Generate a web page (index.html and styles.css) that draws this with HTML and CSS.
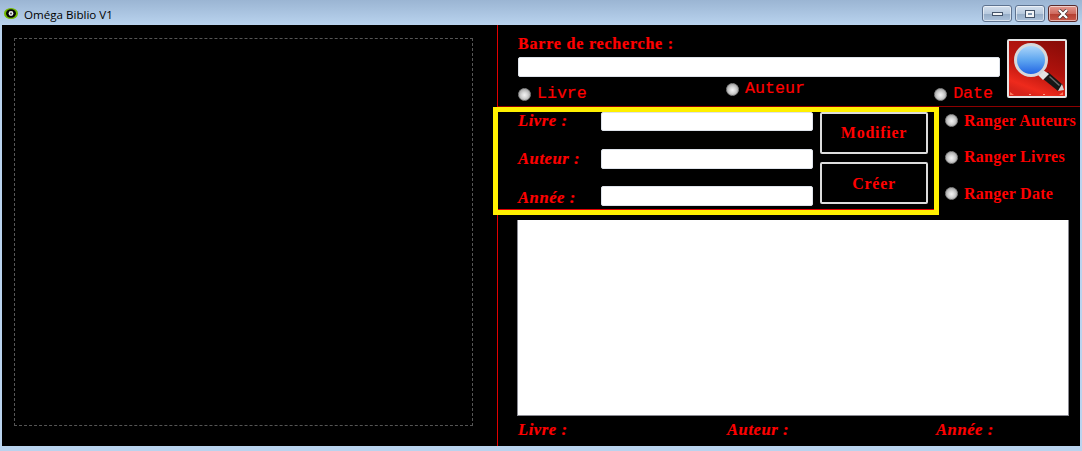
FILE: index.html
```html
<!DOCTYPE html>
<html lang="fr">
<head>
<meta charset="utf-8">
<title>Oméga Biblio V1</title>
<link rel="stylesheet" href="styles.css">
</head>
<body>
<div class="window">
  <header class="titlebar">
    <svg class="app-icon" width="14" height="11" viewBox="0 0 14 11"><ellipse cx="7" cy="5.5" rx="7" ry="5.5" fill="#72b800"/><ellipse cx="7" cy="5.5" rx="5" ry="4.2" fill="#050505"/><circle cx="7" cy="5.5" r="2.4" fill="#eee"/><circle cx="7" cy="5.5" r=".9" fill="#333"/></svg>
    <span class="app-title">Oméga Biblio V1</span>
    <div class="controls">
      <div class="ctl"><svg width="13" height="7" viewBox="0 0 13 7"><rect x="1.5" y="2.5" width="10" height="3" fill="#f2f4f6" stroke="#44546a"/></svg></div>
      <div class="ctl"><svg width="12" height="10" viewBox="0 0 12 10"><rect x="1.5" y="1.5" width="9" height="7" fill="#f2f4f6" stroke="#44546a"/><rect x="4" y="4" width="4" height="2" fill="#7f95ae"/></svg></div>
      <div class="ctl ctl-close"><svg width="14" height="10" viewBox="0 0 14 10"><path d="M3 1 L11 9 M11 1 L3 9" stroke="#4a3030" stroke-width="3.8"/><path d="M3 1 L11 9 M11 1 L3 9" stroke="#fff" stroke-width="2.4"/></svg></div>
    </div>
  </header>
  <main class="client">
    <section class="left"><div class="preview"></div></section>
    <section class="right">
      <div class="search">
        <div class="search-main">
          <div class="search-label">Barre de recherche :</div>
          <div class="field search-field"></div>
          <div class="search-types">
            <label class="type"><span class="radio"></span>Livre</label>
            <label class="type type-raised"><span class="radio"></span>Auteur</label>
            <label class="type"><span class="radio"></span>Date</label>
          </div>
        </div>
        <button class="search-btn" aria-label="Rechercher">
          <svg width="56" height="55" viewBox="0 0 56 55">
            <defs>
              <linearGradient id="bg" x1="0.8" y1="0" x2="0.4" y2="1"><stop offset="0" stop-color="#8a0c08"/><stop offset=".5" stop-color="#b0120c"/><stop offset=".88" stop-color="#ee2a1c"/><stop offset="1" stop-color="#d8241a"/></linearGradient>
              <linearGradient id="lens" x1="0" y1="0" x2="0" y2="1"><stop offset="0" stop-color="#b4dafa"/><stop offset=".5" stop-color="#5ea6f0"/><stop offset="1" stop-color="#1c5ee2"/></linearGradient>
            </defs>
            <rect width="56" height="55" fill="url(#bg)"/>
            <path d="M0 0 H22 L0 22 Z" fill="#d8261a" opacity=".3"/>
            <path d="M39 31 L54 44 L49 50 L33 37 Z" fill="#161616"/>
            <path d="M41 35 L51 44 L50 45 L40 36 Z" fill="#6a6a6a"/>
            <path d="M34 29 L40 33 L34 39 L29 34 Z" fill="#e2e2e2"/>
            <path d="M53 43 L55 49 L49 50 Z" fill="#d4d4d4"/>
            <circle cx="22" cy="19" r="15.5" fill="url(#lens)" stroke="#d6d8da" stroke-width="3"/>
            <path d="M1 51 L5 54 H1 Z M54 51 L54 54 H50 Z" fill="#ff7a60"/>
            <path d="M20 53 h2 v1 h-2 Z M34 53 h2 v1 h-2 Z" fill="#ff9a88"/>
          </svg>
        </button>
      </div>
      <div class="middle">
        <div class="form-box">
          <div class="form-fields">
            <div class="form-row row-a"><span class="italic-label">Livre :</span><div class="field form-field"></div></div>
            <div class="form-row row-b"><span class="italic-label">Auteur :</span><div class="field form-field"></div></div>
            <div class="form-row row-c"><span class="italic-label">Année :</span><div class="field form-field"></div></div>
          </div>
          <div class="form-actions">
            <button class="action">Modifier</button>
            <button class="action action-low">Créer</button>
          </div>
        </div>
        <div class="sort">
          <label class="sort-item"><span class="radio"></span>Ranger Auteurs</label>
          <label class="sort-item"><span class="radio"></span>Ranger Livres</label>
          <label class="sort-item"><span class="radio"></span>Ranger Date</label>
        </div>
      </div>
      <div class="listing"></div>
      <div class="summary">
        <span class="italic-label">Livre :</span>
        <span class="italic-label">Auteur :</span>
        <span class="italic-label">Année :</span>
      </div>
    </section>
  </main>
</div>
</body>
</html>
```
FILE: styles.css
```css
* { box-sizing: border-box; }
html, body { margin: 0; height: 100%; }
body { background: #b9d3ee; overflow: hidden; }
.window { width: 1082px; height: 451px; display: flex; flex-direction: column; background: linear-gradient(#9bb5d3 0, #b9d3ee 25px); padding: 0 2px 5px; }
.titlebar { height: 25px; flex: none; display: flex; align-items: center; padding: 3px 0 0 2px; font: 11.6px "Open Sans", "Noto Sans", sans-serif; color: #000; }
.app-icon { flex: none; margin-top: -2px; }
.app-title { margin-left: 6px; }
.controls { margin-left: auto; display: flex; gap: 3px; padding-right: 2px; align-self: flex-start; margin-top: 2px; }
.ctl { width: 30px; height: 17px; border: 1px solid #5e7390; border-radius: 3px; background: linear-gradient(#d4e0ee 0, #b8cade 50%, #94abc5 51%, #adc3dc 100%); box-shadow: inset 0 0 0 1px rgba(255,255,255,.55); display: flex; align-items: center; justify-content: center; }
.ctl-close { border-color: #5a2a2a; background: linear-gradient(#e39a90 0, #cf6b5f 50%, #b33d2e 51%, #c9584a 100%); }
.client { flex: 1; min-height: 0; display: flex; background: #000; }
.left { width: 495px; flex: none; padding: 13px 24px 20px 12px; }
.preview { height: 100%; border: 1px dashed #555; }
.right { flex: 1; min-width: 0; border-left: 1px solid #e00000; display: flex; flex-direction: column; }
.search { height: 82px; flex: none; display: flex; padding: 10px 13px 0 20px; border-bottom: 1px solid #8e0000; gap: 7px; }
.search-main { width: 482px; flex: none; }
.search-label { font: bold 16px/1 "Liberation Serif", serif; letter-spacing: .8px; -webkit-text-stroke: .2px #f00; color: #f00; height: 22px; padding-top: 1px; }
.field { background: #fff; border: 1px solid #dfe3ea; border-radius: 2px; }
.search-field { height: 20px; }
.search-types { display: flex; justify-content: space-between; padding: 7px 7px 0 0; }
.type { display: flex; align-items: center; gap: 6px; font: 16.6px/1 "Liberation Mono", monospace; color: #f00; height: 20px; -webkit-text-stroke: .2px #f00; }
.type-raised { margin: -5px 0 0 10px; }
.radio { width: 13px; height: 13px; flex: none; border-radius: 50%; border: 1px solid #858585; background: radial-gradient(circle at 50% 55%, #f4f4f4 0, #d8d8d8 35%, #a8a8a8 75%, #8c8c8c 100%); }
.search-btn { width: 60px; height: 59px; flex: none; margin-top: 4px; padding: 0; border: 2px solid #e4e4e4; background: #900; display: block; border-radius: 2px; }
.search-btn svg { display: block; }
.middle { height: 108px; flex: none; display: flex; margin-left: -5px; }
.form-box { width: 446px; flex: none; height: 108px; border: 5px solid #fff000; display: flex; }
.form-fields { width: 322px; flex: none; border-bottom: 1px solid #e00000; }
.form-row { display: flex; align-items: center; height: 20px; padding-left: 20px; }
.row-a { height: 19px; }
.row-b { margin-top: 18px; }
.row-c { margin-top: 17px; }
.row-c .italic-label { padding-top: 4px; }
.italic-label { font: italic bold 16.5px/1 "Liberation Serif", serif; letter-spacing: .6px; -webkit-text-stroke: .2px #f00; color: #f00; white-space: nowrap; }
.form-row .italic-label { width: 83px; flex: none; }
.form-field { width: 212px; height: 100%; }
.form-actions { flex: 1; display: flex; flex-direction: column; gap: 8px; padding-right: 6px; border-bottom: 1px solid #e00000; }
.action { width: 108px; height: 42px; flex: none; border: 2px solid #dcdcdc; border-radius: 2px; background: #000; color: #f00; font: bold 16px "Liberation Serif", serif; letter-spacing: .75px; padding: 0; }
.action-low { padding-top: 2px; }
.sort { flex: 1; min-width: 0; display: flex; flex-direction: column; gap: 23.5px; padding: 7px 0 0 6px; }
.sort-item { display: flex; align-items: center; gap: 6px; font: bold 16px/1 "Liberation Serif", serif; letter-spacing: .25px; color: #f00; height: 13px; white-space: nowrap; }
.listing { margin: 5px 11px 0 19px; height: 196px; flex: none; background: #fff; border: 1px solid #8a8a92; border-width: 0 1px 1px 1px; }
.summary { flex: 1; display: flex; padding: 6px 0 0 20px; }
.summary .italic-label { width: 209px; flex: none; }
.summary .italic-label:last-child { width: auto; }
```
